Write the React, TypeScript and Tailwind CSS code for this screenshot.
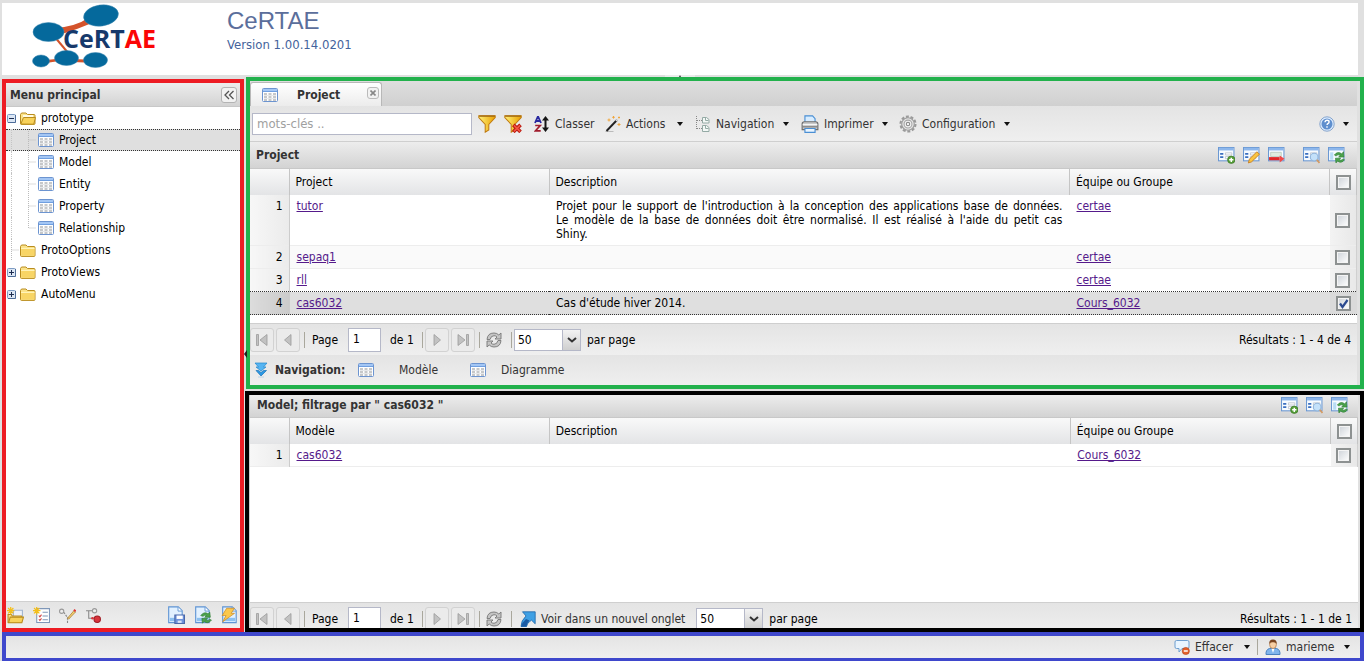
import React, { useState } from 'react';

type P = { children: React.ReactNode; className?: string; label?: string };

const Svg = ({ children, className = 'size-4' }: P) => (
  <svg viewBox="0 0 16 16" className={`${className} shrink-0`} aria-hidden="true">
    {children}
  </svg>
);

const GridIcon = () => (
  <Svg>
    <rect x="0.5" y="1.5" width="15" height="13" rx="1" fill="#fff" stroke="#6c94d0" />
    <rect x="1" y="2" width="14" height="2" fill="#a3c6f4" />
    <rect x="1" y="4" width="14" height="1" fill="#6f9fe0" />
    <path d="M3.500 6v8M8 6v8M12.500 6v8" stroke="#c6c8ca" strokeWidth="3" />
    <path d="M2 8.500h12M2 11.500h12" stroke="#e6e8ea" strokeWidth="1" />
  </Svg>
);

const FolderIcon = ({ open = false }: { open?: boolean }) => (
  <Svg>
    <path d="M0.5 13.5v-9l1-1.5h4.5l1.500 1.500h6.500q1 0 1 1v8q0 .9-1 .9h-12.500q-1 0-1-.9z" fill="#fbe38a" stroke="#b98c1e" />
    {open ? (
      <>
        <path d="M3 5h10v3H3z" fill="#fffbe4" />
        <path d="M0.800 14 3.500 7.500h12l-1.800 6.700z" fill="#f8d25a" stroke="#b98c1e" />
      </>
    ) : (
      <>
        <path d="M1.300 6h13.200v7.500H1.300z" fill="#f8d566" />
        <path d="M1 6.500h13.500" stroke="#fff3b8" />
      </>
    )}
  </Svg>
);

const Toggle = ({ plus = false }: { plus?: boolean }) => (
  <svg viewBox="0 0 9 9" className="size-[9px] shrink-0" aria-hidden="true">
    <rect x="0.5" y="0.5" width="8" height="8" rx="1" fill="#dbe6f4" stroke="#7e9cc4" />
    <path d="M1 8.500h7.500V1" stroke="#4d6c98" fill="none" />
    <path d={plus ? 'M2 4.500h5M4.500 2v5' : 'M2 4.500h5'} stroke="#1c2c50" />
  </svg>
);

const Star = () => (
  <path d="M3.500 0v7M0 3.500h7M1 1l5 5M6 1 1 6" stroke="#f4bf1c" strokeWidth="1.200" />
);

const Caret = ({ className = '' }: { className?: string }) => (
  <svg viewBox="0 0 6 4" className={`h-1 w-1.5 shrink-0 ${className}`} aria-hidden="true">
    <path d="M0 0h6L3 4z" fill="#111" />
  </svg>
);

const FilterIcon = ({ clear = false }: { clear?: boolean }) => (
  <Svg className="size-[18px]">
    <defs>
      <linearGradient id="funnel">
        <stop offset="0" stopColor="#fff27a" />
        <stop offset="1" stopColor="#eaa000" />
      </linearGradient>
    </defs>
    <path d="M0.700 0.700h14.600v1.600L9.600 8.300v5l-3.200 2v-7L.7 2.300z" fill="url(#funnel)" stroke="#c07a10" strokeWidth="0.900" />
    <path d="M1 1h14" stroke="#9a6410" />
    {clear && (
      <>
        <path d="M8.300 8.800l6.400 6.200M14.700 8.800 8.300 15" stroke="#b9160c" strokeWidth="3.200" />
        <path d="M8.800 9.300l5.500 5.300M14.300 9.300l-5.500 5.300" stroke="#f25545" strokeWidth="1.500" />
      </>
    )}
  </Svg>
);

const SortIcon = () => (
  <Svg>
    <path d="M1 7 3.700 1h.6L7 7M2 5h4" stroke="#2a2aa0" strokeWidth="1.800" fill="none" />
    <path d="M1.200 9.500h5L1.500 14.800h5.200" stroke="#a01c2c" strokeWidth="1.700" fill="none" />
    <path d="M11.500 0 15 4.500h-2.500v7H15L11.500 16 8 11.500h2.500v-7H8z" fill="#151515" />
  </Svg>
);

const WandIcon = () => (
  <Svg>
    <path d="M0.500 15.500h8" stroke="#bbb" />
    <path d="M1.500 15 12 4" stroke="#222" strokeWidth="1.900" />
    <path d="M11 5 13 3" stroke="#ddd" strokeWidth="1.600" />
    <path d="M4 2.500v3M2.500 4h3M8.500 0v2.600M7.200 1.300h2.600M14 .5v2M13 1.500h2M14 7v3M12.500 8.500h3" stroke="#f0a63c" />
  </Svg>
);

const TreeIcon = () => (
  <Svg>
    <path d="M1.500 0v14M2 4.500h5M2 12.500h5" stroke="#888" strokeDasharray="1 1" fill="none" />
    <path d="M7.500 1.500h4l2.500 2V7H7.500zM7.500 9.500h4l2.500 2v4H7.500z" fill="#f3f8f6" stroke="#94aaa5" />
    <path d="M10.500 2v2.500h3M10.500 10v2.500h3" stroke="#94aaa5" fill="none" />
  </Svg>
);

const PrinterIcon = () => (
  <Svg className="size-[18px]">
    <path d="M3.500 7V.8h6.800l2.200 2.400V7z" fill="#d7ecff" stroke="#4a8fd4" />
    <path d="M1 8q0-2 2-2h10q2 0 2 2v5H1z" fill="#c9c9c9" stroke="#6d6d6d" />
    <path d="M1.500 8.500h13" stroke="#f6f6f6" />
    <path d="M1.500 10.500h13" stroke="#777" />
    <path d="M3.500 12h9v3.400h-9z" fill="#eaf5ff" stroke="#4a8fd4" />
  </Svg>
);

const GearIcon = () => (
  <Svg className="size-[18px]">
    <circle cx="8" cy="8" r="6.600" fill="none" stroke="#9a9a9a" strokeWidth="2" strokeDasharray="2.600 1.550" />
    <circle cx="8" cy="8" r="5.600" fill="#e6e6e6" stroke="#9a9a9a" />
    <circle cx="8" cy="8" r="3.500" fill="#f3f3f3" stroke="#a8a8a8" />
    <circle cx="8" cy="8" r="1.500" fill="#fff" stroke="#8c8c8c" />
  </Svg>
);

const HelpIcon = () => (
  <Svg>
    <circle cx="8" cy="8" r="7.200" fill="#dcecff" stroke="#86a4cc" />
    <circle cx="8" cy="8" r="5.500" fill="#5f8fce" />
    <path d="M6 6.300q.2-2 2.100-2 2 0 2 1.700 0 1-1.200 1.700-.8.500-.8 1.300M8 10.300v1.500" stroke="#fff" strokeWidth="1.400" fill="none" />
  </Svg>
);

type FormKind = 'add' | 'edit' | 'delete' | 'view' | 'reload';
const FormIcon = ({ kind }: { kind: FormKind }) => (
  <Svg className="size-[17px]">
    <rect x="0.500" y="0.500" width="14.500" height="12.500" fill="#f7fbff" stroke="#6b98d2" />
    <path d="M1 2h13.500" stroke="#8db7ec" strokeWidth="2.500" />
    {kind === 'reload' ? (
      <>
        <rect x="2" y="5" width="3" height="7" fill="#b9dcf4" />
        <path d="M6 7.500q3-4 7-1l1.500-2 .5 5H10l1.500-1.600q-2-1.500-4 .6z" fill="#4ca34c" stroke="#2e7c34" strokeWidth="0.600" />
        <path d="M15.500 12q-3 4-6.500 1.200L7.500 15 7 10.500h5l-1.600 1.400q1.800 1.300 3.800-.6z" fill="#4ca34c" stroke="#2e7c34" strokeWidth="0.600" />
      </>
    ) : kind === 'delete' ? (
      <>
        <path d="M2.500 5h10v4h-10z" fill="#e0ecdf" stroke="#b4c4b8" strokeWidth="0.700" />
        <path d="M1 11h10" stroke="#e02828" strokeWidth="3" />
        <path d="M11 8l4.500 3-4.500 3.500z" fill="#f04a4a" />
      </>
    ) : (
      <path d="M2 6.500h3M2 9.500h3" stroke="#3b6fc0" strokeWidth="1.500" />
    )}
    {kind !== 'reload' && kind !== 'delete' && <path d="M7 5.500h6v2H7zM7 9h5v2H7z" fill="#fff" stroke="#b5bcc6" strokeWidth="0.700" />}
    {kind === 'add' && (
      <>
        <circle cx="12.500" cy="12" r="3.500" fill="#58a03a" stroke="#347020" strokeWidth="0.600" />
        <path d="M10.500 12h4M12.500 10v4" stroke="#fff" strokeWidth="1.400" />
      </>
    )}
    {kind === 'edit' && <path d="M5 15l1-3.500L13 4.500l2.500 2.300L8 14z" fill="#f9c440" stroke="#c47a20" strokeWidth="0.800" />}
    {kind === 'view' && (
      <>
        <circle cx="10.500" cy="9.500" r="3.600" fill="#c4e1fa" stroke="#92b6dc" />
        <path d="M13 12l2.500 3" stroke="#d49a62" strokeWidth="1.600" />
      </>
    )}
  </Svg>
);

const PageIcon = ({ kind }: { kind: 'save' | 'reload' | 'flash' }) => (
  <Svg className="size-[18px]">
    <path d="M1.500.8h8.500l3.500 3.500v10.500h-12z" fill="#e2f1ff" stroke="#5f94d4" />
    <path d="M9.800 1v3.500h3.500" fill="#fff" stroke="#5f94d4" strokeWidth="0.800" />
    <path d="M2.500 12h10" stroke="#8cc0f0" strokeWidth="3" />
    {kind === 'save' && (
      <>
        <path d="M7 8h8.500v7.500H7z" fill="#6f93dc" stroke="#4a68a8" />
        <path d="M8.500 8.500h5.500v3H8.500z" fill="#fff" />
        <path d="M9.500 13h3.500v2H9.500z" fill="#dce6f6" />
      </>
    )}
    {kind === 'reload' && (
      <>
        <path d="M6 8.500q3-4 6.500-1.500L14 5.500l.5 4.500h-5L11 8.500q-1.500-1-3 .7z" fill="#4ca34c" stroke="#2e7c34" strokeWidth="0.600" />
        <path d="M15.500 12.500q-3 4-6.500 1.200L7.500 15.300 7 11h5l-1.600 1.400q1.800 1 3.800-.4z" fill="#4ca34c" stroke="#2e7c34" strokeWidth="0.600" />
      </>
    )}
    {kind === 'flash' && <path d="M5 2h7L9 6.500h3L1.500 14l3-5.500H1z" fill="#fbc84c" stroke="#cf8f2a" strokeWidth="0.700" />}
  </Svg>
);

const NewFolderIcon = () => (
  <Svg className="size-[17px]">
    <path d="M6 3h8.500v8H6z" fill="#eef2f8" stroke="#9fb4d0" />
    <path d="M1 14.500V7h3l1 1.500h8.500v6z" fill="#fbe38a" stroke="#b98c1e" />
    <path d="M1.500 14.800 3 9.500h12.500l-1.500 5.300z" fill="#f8d25a" stroke="#b98c1e" />
    <Star />
  </Svg>
);

const NewListIcon = () => (
  <Svg className="size-[17px]">
    <path d="M3.500 1.500h12v13h-12z" fill="#fff" stroke="#7f97b8" />
    <path d="M9 5h5M9 8.500h5M9 12h5" stroke="#7f97b8" />
    <path d="M5.500 8l1 1.200 1.500-2M5.500 11.500l1 1.200 1.500-2" stroke="#d04040" fill="none" />
    <Star />
  </Svg>
);

const EditNodeIcon = () => (
  <Svg className="size-[17px]">
    <circle cx="2.500" cy="4" r="2" fill="#eee" stroke="#999" />
    <path d="M4.500 5 8 10h3M8 10v5" stroke="#888" fill="none" strokeDasharray="2 1" />
    <path d="M8 10.500 14 3.500l1.500 1.200L9 11.500z" fill="#f4cf70" stroke="#a57b30" strokeWidth="0.700" />
    <path d="M14 2.500l1.800 1.500" stroke="#e03434" strokeWidth="1.800" />
  </Svg>
);

const DeleteNodeIcon = () => (
  <Svg className="size-[17px]">
    <path d="M1 3.500h6M3.500 4v6.500H10" stroke="#888" fill="none" />
    <circle cx="9" cy="3.500" r="2" fill="#eee" stroke="#999" />
    <circle cx="11.500" cy="11.500" r="3" fill="#d8343c" stroke="#a01c24" />
    <circle cx="7" cy="10.500" r="1.200" fill="#d8343c" />
  </Svg>
);

const DoubleDownIcon = () => (
  <Svg>
    <path d="M1 1h12L9.500 5H12L7 9 2 5h2.500z" fill="#55b4f2" stroke="#2387cc" strokeWidth="0.700" />
    <path d="M2 8.500h2.500L7 10.500 9.500 8.500H12.500L7 14z" fill="#2b98e4" stroke="#1b74b8" strokeWidth="0.700" />
    <path d="M4 15h6" stroke="#b9d4e8" />
  </Svg>
);

const OpenIcon = () => (
  <Svg>
    <path d="M2.500.8h12.700v12l-3.700-3.600Q7 11.500 6.500 15.500H1Q1 9.500 6 5z" fill="#3fa0e4" stroke="#1e64a8" strokeWidth="0.800" />
    <path d="M1 15.500h5.500Q6.500 12 9.500 9.500L6 8Q2 11.500 1 15.500z" fill="#1b5ba4" />
  </Svg>
);

const ChatIcon = () => (
  <Svg>
    <path d="M2.500 1.500h11q1.500 0 1.500 1.500v5q0 1.500-1.500 1.500H8L5 13V9.500H2.500Q1 9.500 1 8V3q0-1.500 1.500-1.500z" fill="#e9f5ff" stroke="#6f9fcf" />
    <circle cx="11.800" cy="12" r="3.600" fill="#e4602a" stroke="#b04018" strokeWidth="0.600" />
    <path d="M9.800 12h4" stroke="#fff" strokeWidth="1.500" />
  </Svg>
);

const UserIcon = () => (
  <Svg>
    <path d="M1 15.500q-.3-5 3.500-6h7q3.800 1 3.500 6z" fill="#7fb4ec" stroke="#4a82c0" />
    <path d="M6.500 9.500h3L8 14z" fill="#fff" />
    <ellipse cx="8" cy="5.500" rx="3.400" ry="4" fill="#f7cfa4" stroke="#a8703e" strokeWidth="0.700" />
    <path d="M4.300 5Q4 .5 8 .5T11.700 5Q11 3 8 3.200 5 3 4.300 5z" fill="#7a4420" />
  </Svg>
);

const RefreshIcon = () => (
  <Svg>
    <path d="M1 7.500Q1.500 1 8 1q3 0 4.800 2L15 1v6H9l2-2Q9.800 3.700 8 3.700q-3 0-4 3.800z" fill="#c4c4c4" stroke="#777" strokeWidth="0.900" />
    <path d="M15 8.500Q14.500 15 8 15q-3 0-4.800-2L1 15V9h6l-2 2q1.200 1.300 3 1.300 3 0 4-3.800z" fill="#c4c4c4" stroke="#777" strokeWidth="0.900" />
  </Svg>
);

const PagerArrow = ({ kind }: { kind: 'first' | 'prev' | 'next' | 'last' }) => {
  const shape = {
    first: 'M2.500 2.500h2v11h-2zM13 2.500v11L6 8z',
    prev: 'M11 2.500v11L4.500 8z',
    next: 'M5 2.500v11L11.500 8z',
    last: 'M3 2.500v11L10 8zM11.500 2.500h2v11h-2z',
  }[kind];
  return (
    <Svg>
      <path d={shape} fill="#c2c2c2" stroke="#9b9b9b" strokeWidth="0.800" />
    </Svg>
  );
};

const PagerButton = ({ kind, label }: { kind: 'first' | 'prev' | 'next' | 'last'; label: string }) => (
  <button aria-label={label} className="flex size-6 shrink-0 items-center justify-center rounded-[3px] border border-[#d2d2d2] bg-[#ebebeb]">
    <PagerArrow kind={kind} />
  </button>
);

const Sep = ({ className = '' }: { className?: string }) => (
  <span className={`h-4 w-px shrink-0 bg-[#a9a79c] ${className}`} />
);

const Check = ({ label, defaultChecked = false }: { label: string; defaultChecked?: boolean }) => (
  <label className="relative mx-auto block size-[15px]">
    <input
      type="checkbox"
      aria-label={label}
      defaultChecked={defaultChecked}
      className="peer block size-[15px] appearance-none border-2 border-[#8d9191] bg-linear-to-br from-[#cdd2d8] to-white shadow-[inset_0_0_0_1px_#f4f4f4]"
    />
    <svg viewBox="0 0 15 15" className="pointer-events-none absolute inset-0 hidden size-[15px] peer-checked:block" aria-hidden="true">
      <path d="M4 7.500 6.500 11 11.500 4" stroke="#2c4a90" strokeWidth="2.200" fill="none" />
    </svg>
  </label>
);

const PageSize = ({ id }: { id: string }) => (
  <span className="relative block h-[22px] w-[67px] shrink-0">
    <select id={id} defaultValue="50" className="h-[22px] w-full appearance-none border border-[#b5b8c8] bg-white px-[3px] text-xs text-black">
      <option>25</option>
      <option>50</option>
      <option>100</option>
    </select>
    <span className="pointer-events-none absolute inset-y-px right-px flex w-[18px] items-center justify-center border-l border-[#b5b8c8] bg-linear-to-b from-[#f3f3f3] to-[#cfcfcf]">
      <svg viewBox="0 0 10 6" className="h-1.5 w-2.5" aria-hidden="true">
        <path d="M1 1l4 3.500L9 1" stroke="#333" strokeWidth="2" fill="none" />
      </svg>
    </span>
  </span>
);

const Pager = ({ id, result, children }: { id: string; result: string; children?: React.ReactNode }) => (
  <div className="flex h-8 shrink-0 items-center border-t border-[#cfcfcf] bg-linear-to-b from-[#e4e4e4] to-[#efefef] pr-1.5 text-black">
    <div className="flex items-center gap-0.5">
      <PagerButton kind="first" label="Première page" />
      <PagerButton kind="prev" label="Page précédente" />
    </div>
    <Sep className="ml-1" />
    <label htmlFor={`${id}-page`} className="ml-[7px] w-9">Page</label>
    <input id={`${id}-page`} defaultValue="1" className="h-6 w-[33px] border border-[#b5b8c8] bg-white px-1 pb-0.5 text-xs" />
    <span className="ml-[9px] w-8">de 1</span>
    <Sep />
    <div className="ml-0.5 flex items-center gap-0.5">
      <PagerButton kind="next" label="Page suivante" />
      <PagerButton kind="last" label="Dernière page" />
    </div>
    <Sep className="ml-1" />
    <button aria-label="Actualiser" className="ml-1.5"><RefreshIcon /></button>
    <Sep className="mr-0.5 ml-[9px]" />
    {children}
    <PageSize id={`${id}-size`} />
    <label htmlFor={`${id}-size`} className="ml-1.5">par page</label>
    <span className="ml-auto">{result}</span>
  </div>
);

const HeadCell = ({ children, className = '' }: { children?: React.ReactNode; className?: string }) => (
  <th className={`h-[26px] border-r border-[#c5c5c5] px-1.5 text-left font-normal ${className}`}>{children}</th>
);

type Row = { name: string; desc?: string[]; team: string; checked?: boolean };

const rowStyle = (rows: Row[], i: number) => {
  if (rows[i].checked) return 'border-y border-dotted border-[#333] bg-[#dfdfdf]';
  const stripe = i % 2 ? 'bg-[#fafafa]' : 'bg-white';
  return rows[i + 1]?.checked ? stripe : `border-b border-[#ededed] ${stripe}`;
};

const DataTable = ({ first, rows }: { first: string; rows: Row[] }) => (
  <table className="w-full table-fixed border-collapse bg-white text-black">
    <colgroup>
      <col className="w-[39px]" />
      <col className="w-[23.5%]" />
      <col />
      <col className="w-[23.5%]" />
      <col className="w-[27px]" />
    </colgroup>
    <thead>
      <tr className="bg-linear-to-b from-[#f9f9f9] to-[#e3e4e6]">
        <HeadCell />
        <HeadCell>{first}</HeadCell>
        <HeadCell>Description</HeadCell>
        <HeadCell>Équipe ou Groupe</HeadCell>
        <HeadCell className="px-0"><Check label="Tout sélectionner" /></HeadCell>
      </tr>
    </thead>
    <tbody>
      {rows.map((r, i) => (
        <tr key={r.name} className={rowStyle(rows, i)}>
          <td className={`border-r border-[#cccccc] px-1.5 py-1 text-right align-top leading-[14px] ${r.checked ? 'bg-linear-to-r from-[#dcdcdc] to-[#cbcbcb]' : 'bg-linear-to-r from-[#f7f7f7] to-[#ebebeb]'}`}>{i + 1}</td>
          <td className="px-[7px] py-1 align-top leading-[14px]"><a href="#" className="text-[#551a8b] underline">{r.name}</a></td>
          <td className="px-[7px] py-1 align-top leading-[14px]">
            {r.desc?.map((line) => (
              <span key={line} className="block text-justify not-last:[text-align-last:justify]">{line}</span>
            ))}
          </td>
          <td className="px-[7px] py-1 align-top leading-[14px]"><a href="#" className="text-[#551a8b] underline">{r.team}</a></td>
          <td className={r.checked ? 'bg-[#dadada]' : 'border-r border-[#d0d0d0] bg-linear-to-r from-[#f3f3f3] to-[#e8e8e8]'}>
            <Check label={`Sélectionner ${r.name}`} defaultChecked={r.checked} />
          </td>
        </tr>
      ))}
    </tbody>
  </table>
);

const Tool = ({ children, label, className = '' }: P) => (
  <button className={`flex shrink-0 items-center whitespace-nowrap ${className}`}>
    {children}
    <span className="ml-[5px]">{label}</span>
  </button>
);

const projects: Row[] = [
  {
    name: 'tutor',
    desc: [
      "Projet pour le support de l'introduction à la conception des applications base de données.",
      "Le modèle de la base de données doit être normalisé. Il est réalisé à l'aide du petit cas",
      'Shiny.',
    ],
    team: 'certae',
  },
  { name: 'sepaq1', team: 'certae' },
  { name: 'rll', team: 'certae' },
  { name: 'cas6032', desc: ["Cas d'étude hiver 2014."], team: 'Cours_6032', checked: true },
];

const entries = ['Project', 'Model', 'Entity', 'Property', 'Relationship'];

const Logo = () => (
  <svg viewBox="0 0 126 66" className="h-[66px] w-[126px]" role="img" aria-label="CeRTAE">
    <path d="M24 24Q45 22 56 14l4 5Q46 25 30 30zM14 56l20-2v2l-20 3zM40 55l26 1v3l-26-1z" fill="#d4532b" />
    <path d="M22 32 37 50" stroke="#d4532b" strokeWidth="2" />
    <g fill="#05699c" stroke="#3a86b0" strokeWidth="0.500">
      <ellipse cx="69" cy="11.500" rx="17.500" ry="10.500" transform="rotate(-8 69 11.500)" />
      <ellipse cx="16.500" cy="28" rx="15.500" ry="9.500" />
      <ellipse cx="9" cy="57" rx="8.500" ry="6" />
      <ellipse cx="34.500" cy="54" rx="12" ry="7.500" />
      <ellipse cx="63.500" cy="56" rx="12" ry="7.500" />
    </g>
    <text x="31" y="43.500" fontFamily="'Open Sans', 'Noto Sans', sans-serif" fontWeight="700" fontSize="25" fill="#16396b">
      CeRT<tspan fill="#fb0505">AE</tspan>
    </text>
  </svg>
);

export default function App() {
  const [selected, setSelected] = useState('Project');
  const header = 'flex shrink-0 items-center border-b border-[#c8c8c8] bg-linear-to-b from-[#ededed] to-[#d3d3d3] font-bold text-[#333]';
  return (
    <div className="flex h-screen flex-col overflow-hidden bg-[#e0e0e0] pl-0.5 font-['DejaVu_Sans_Condensed','DejaVu_Sans',sans-serif] text-xs text-[#333]">
      <header className="relative mt-[3px] mr-1.5 flex h-[72px] shrink-0 bg-white pt-px pl-[30px]">
        <Logo />
        <div className="pt-[3px] pl-[69px]">
          <h1 className="font-['Liberation_Sans',Arial,sans-serif] text-2xl leading-[28px] text-[#5b6e9b]">CeRTAE</h1>
          <p className="mt-0.5 text-[13px] leading-4 text-[#44639c]">Version 1.00.14.0201</p>
        </div>
        <svg viewBox="0 0 30 2" className="absolute top-full left-1/2 h-0.5 w-[30px] -translate-x-1/2" aria-hidden="true">
          <path d="M0 0h30v2H0z" fill="#ececec" />
          <path d="M14 2l1-2 1 2z" fill="#333" />
        </svg>
      </header>

      <div className="flex min-h-0 flex-1">
        <nav className="mt-1 flex w-[242px] shrink-0 flex-col border-4 border-[#ed1c24] bg-white">
          <div className={`${header} h-6 justify-between pr-[3px] pl-1`}>
            Menu principal
            <button aria-label="Réduire le menu" className="flex size-4 items-center justify-center rounded-[3px] border border-[#b4b4b4] bg-[#f2f2f2]">
              <svg viewBox="0 0 10 10" className="size-2.5" aria-hidden="true">
                <path d="M5 1 1 5l4 4M9.500 1l-4 4 4 4" stroke="#555" strokeWidth="1.300" fill="none" />
              </svg>
            </button>
          </div>
          <ul className="min-h-0 flex-1 leading-[22px] text-black">
            <li>
              <div className="flex h-[22px] items-center pl-px">
                <Toggle />
                <span className="mr-[5px] ml-1"><FolderIcon open /></span>prototype
              </div>
              <ul>
                {entries.map((c) => (
                  <li key={c}>
                    <button
                      onClick={() => setSelected(c)}
                      className={`flex h-[22px] w-full items-center border-y border-dotted pl-[5px] text-left ${c === selected ? 'border-[#333] bg-[#dfdfdf]' : 'border-transparent'}`}
                    >
                      <span className="h-[22px] shrink-0 border-l border-dotted border-[#c4c4c4]" />
                      <svg viewBox="0 0 8 22" className="mr-0.5 ml-4 h-[22px] w-2 shrink-0" aria-hidden="true">
                        <path d={c === 'Relationship' ? 'M.5 0v11H8' : 'M.5 0v22M.5 11H8'} stroke="#bbb" strokeDasharray="1 1" fill="none" />
                      </svg>
                      <GridIcon />
                      <span className="ml-[5px]">{c}</span>
                    </button>
                  </li>
                ))}
              </ul>
            </li>
            <li className="flex h-[22px] items-center pl-[5px]">
              <svg viewBox="0 0 8 22" className="mr-px h-[22px] w-2 shrink-0" aria-hidden="true">
                <path d="M.5 0v22M.5 11H8" stroke="#bbb" strokeDasharray="1 1" fill="none" />
              </svg>
              <span className="mr-[5px]"><FolderIcon /></span>ProtoOptions
            </li>
            {['ProtoViews', 'AutoMenu'].map((f) => (
              <li key={f} className="flex h-[22px] items-center pl-px">
                <Toggle plus />
                <span className="mr-[5px] ml-1"><FolderIcon /></span>{f}
              </li>
            ))}
          </ul>
          <div className="flex h-[27px] shrink-0 items-center gap-[9px] border-t border-[#d0d0d0] bg-linear-to-b from-[#e4e4e4] to-[#efefef] px-px">
            <button aria-label="Nouveau dossier"><NewFolderIcon /></button>
            <button aria-label="Nouvelle liste"><NewListIcon /></button>
            <button aria-label="Modifier le nœud"><EditNodeIcon /></button>
            <button aria-label="Supprimer le nœud"><DeleteNodeIcon /></button>
            <span className="flex-1" />
            <button aria-label="Enregistrer"><PageIcon kind="save" /></button>
            <button aria-label="Recharger"><PageIcon kind="reload" /></button>
            <button aria-label="Réinitialiser"><PageIcon kind="flash" /></button>
          </div>
        </nav>

        <main className="relative flex min-w-0 flex-1 flex-col pt-0.5">
          <svg viewBox="0 0 3 8" className="absolute top-1/2 left-0 h-2 w-[3px] -translate-y-1/2" aria-hidden="true">
            <path d="M3 0v8L0 4z" fill="#222" />
          </svg>
          <section className="ml-0.5 flex shrink-0 flex-col border-4 border-[#22b14c] pr-[3px]">
            <div className="flex h-[25px] items-end bg-linear-to-b from-[#dedede] to-[#d0d0d0]">
              <div className="flex h-6 w-[132px] items-center rounded-t-[3px] border border-b-0 border-[#b8b8b8] bg-linear-to-b from-white to-[#ececec] pl-[11px] font-bold">
                <GridIcon />
                <span className="ml-[19px]">Project</span>
                <button aria-label="Fermer" className="mr-0.5 mb-1 ml-auto flex size-3 items-center justify-center rounded-[3px] border border-[#bbb] bg-[#f2f2f2]">
                  <svg viewBox="0 0 6 6" className="size-1.5" aria-hidden="true"><path d="M.5.5l5 5M5.500.5l-5 5" stroke="#888" strokeWidth="1.600" /></svg>
                </button>
              </div>
            </div>
            <div className="flex h-9 items-center border-b border-[#cfcfcf] bg-linear-to-b from-[#e4e4e4] to-[#efefef] pl-0.5">
              <input aria-label="mots-clés" placeholder="mots-clés .." className="h-[22px] w-[220px] shrink-0 border border-[#b5b8c8] bg-white px-1 text-[13px] placeholder:text-[#a0a0a0]" />
              <button aria-label="Filtrer" className="ml-1.5"><FilterIcon /></button>
              <button aria-label="Effacer le filtre" className="ml-2"><FilterIcon clear /></button>
              <Tool label="Classer" className="ml-3 w-[71px]"><SortIcon /></Tool>
              <Tool label="Actions" className="w-[72px]"><WandIcon /></Tool>
              <Caret className="mr-3" />
              <Tool label="Navigation" className="w-[88px]"><TreeIcon /></Tool>
              <Caret className="mr-3" />
              <Tool label="Imprimer" className="w-[81px]"><PrinterIcon /></Tool>
              <Caret className="mr-[11px]" />
              <Tool label="Configuration" className="w-[105px]"><GearIcon /></Tool>
              <Caret />
              <button aria-label="Aide" className="mr-2 ml-auto flex items-center gap-2"><HelpIcon /><Caret /></button>
            </div>
            <div className={`${header} h-[27px] gap-2 pr-3 pl-1.5`}>
              <h2 className="flex-1">Project</h2>
              <button aria-label="Ajouter"><FormIcon kind="add" /></button>
              <button aria-label="Modifier"><FormIcon kind="edit" /></button>
              <button aria-label="Supprimer" className="mr-2.5"><FormIcon kind="delete" /></button>
              <button aria-label="Consulter"><FormIcon kind="view" /></button>
              <button aria-label="Recharger"><FormIcon kind="reload" /></button>
            </div>
            <div className="bg-white pb-2">
              <DataTable first="Project" rows={projects} />
            </div>
            <Pager id="project" result="Résultats : 1 - 4 de 4" />
            <div className="flex h-[30px] items-center bg-linear-to-b from-[#e4e4e4] to-[#efefef] pl-1">
              <DoubleDownIcon />
              <b className="ml-[5px] w-[83px]">Navigation:</b>
              <button className="flex w-28 items-center"><GridIcon /><span className="ml-[25px]">Modèle</span></button>
              <button className="flex items-center"><GridIcon /><span className="ml-[15px]">Diagramme</span></button>
            </div>
          </section>

          <section className="mt-0.5 ml-px flex min-h-0 flex-1 flex-col overflow-hidden border-4 border-black pr-0.5">
            <div className={`${header} h-[23px] gap-2 border-l pr-2.5 pb-0.5 pl-[7px]`}>
              <h2 className="flex-1">Model; filtrage par " cas6032 "</h2>
              <button aria-label="Ajouter"><FormIcon kind="add" /></button>
              <button aria-label="Consulter"><FormIcon kind="view" /></button>
              <button aria-label="Recharger"><FormIcon kind="reload" /></button>
            </div>
            <div className="min-h-0 flex-1 border-l border-[#d0d0d0] bg-white">
              <DataTable first="Modèle" rows={[{ name: 'cas6032', team: 'Cours_6032' }]} />
            </div>
            <div className="-mb-1.5 border-l border-[#d0d0d0]">
              <Pager id="model" result="Résultats : 1 - 1 de 1">
                <button className="mr-[11px] ml-1.5 flex items-center gap-[5px] text-[#333]"><OpenIcon />Voir dans un nouvel onglet</button>
              </Pager>
            </div>
          </section>
        </main>
      </div>

      <footer className="flex h-[29px] shrink-0 items-center justify-end border-4 border-b-[3px] border-[#3f48cc] bg-linear-to-b from-[#e4e4e4] to-[#efefef] pr-2.5">
        <Tool label="Effacer" className="w-[70px]"><ChatIcon /></Tool>
        <Caret />
        <Sep className="mx-[7px]" />
        <Tool label="marieme" className="w-[79px]"><UserIcon /></Tool>
        <Caret />
      </footer>
    </div>
  );
}
